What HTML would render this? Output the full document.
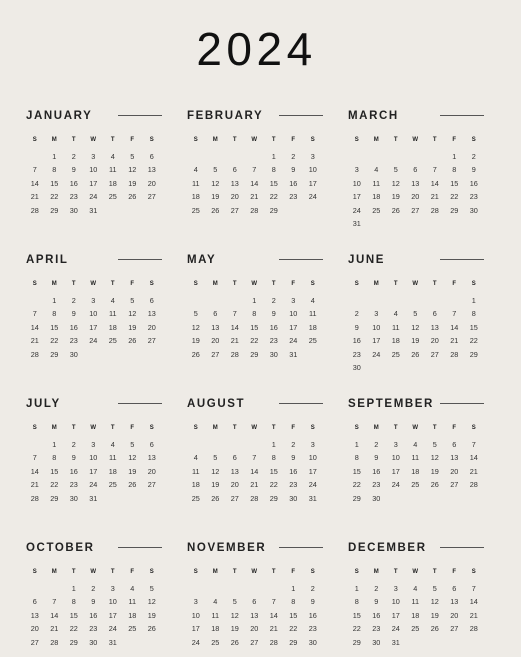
<!DOCTYPE html>
<html><head><meta charset="utf-8"><style>
body{margin:0;width:521px;height:657px;background:#eeebe6;font-family:"Liberation Sans",sans-serif;position:relative;overflow:hidden;color:#2a2a2a}
h1{position:absolute;top:24px;left:-4px;width:521px;text-align:center;margin:0;font-size:46px;font-weight:normal;letter-spacing:4.5px;line-height:50px;color:#111;box-sizing:border-box}
.m{position:absolute;width:140px}
.t{position:absolute;top:0;left:1px;font-size:11.5px;font-weight:bold;letter-spacing:1.6px;color:#222;line-height:14px}
.ln{position:absolute;top:6px;left:93px;width:44px;height:1.3px;background:#555}
.g{position:absolute;top:25px;left:0;display:grid;grid-template-columns:repeat(7,19.5px);grid-template-rows:15.5px;grid-auto-rows:13.5px;font-size:7.3px;text-align:center;line-height:13.5px;color:#333}
.h{font-size:6px;font-weight:bold;color:#222}
</style></head><body>
<h1>2024</h1>

<div class="m" style="left:25px;top:109px"><div class="t">JANUARY</div><div class="ln"></div><div class="g"><b class="h">S</b><b class="h">M</b><b class="h">T</b><b class="h">W</b><b class="h">T</b><b class="h">F</b><b class="h">S</b><span style="grid-column-start:2">1</span><span>2</span><span>3</span><span>4</span><span>5</span><span>6</span><span>7</span><span>8</span><span>9</span><span>10</span><span>11</span><span>12</span><span>13</span><span>14</span><span>15</span><span>16</span><span>17</span><span>18</span><span>19</span><span>20</span><span>21</span><span>22</span><span>23</span><span>24</span><span>25</span><span>26</span><span>27</span><span>28</span><span>29</span><span>30</span><span>31</span></div></div>

<div class="m" style="left:186px;top:109px"><div class="t">FEBRUARY</div><div class="ln"></div><div class="g"><b class="h">S</b><b class="h">M</b><b class="h">T</b><b class="h">W</b><b class="h">T</b><b class="h">F</b><b class="h">S</b><span style="grid-column-start:5">1</span><span>2</span><span>3</span><span>4</span><span>5</span><span>6</span><span>7</span><span>8</span><span>9</span><span>10</span><span>11</span><span>12</span><span>13</span><span>14</span><span>15</span><span>16</span><span>17</span><span>18</span><span>19</span><span>20</span><span>21</span><span>22</span><span>23</span><span>24</span><span>25</span><span>26</span><span>27</span><span>28</span><span>29</span></div></div>

<div class="m" style="left:347px;top:109px"><div class="t">MARCH</div><div class="ln"></div><div class="g"><b class="h">S</b><b class="h">M</b><b class="h">T</b><b class="h">W</b><b class="h">T</b><b class="h">F</b><b class="h">S</b><span style="grid-column-start:6">1</span><span>2</span><span>3</span><span>4</span><span>5</span><span>6</span><span>7</span><span>8</span><span>9</span><span>10</span><span>11</span><span>12</span><span>13</span><span>14</span><span>15</span><span>16</span><span>17</span><span>18</span><span>19</span><span>20</span><span>21</span><span>22</span><span>23</span><span>24</span><span>25</span><span>26</span><span>27</span><span>28</span><span>29</span><span>30</span><span>31</span></div></div>

<div class="m" style="left:25px;top:253px"><div class="t">APRIL</div><div class="ln"></div><div class="g"><b class="h">S</b><b class="h">M</b><b class="h">T</b><b class="h">W</b><b class="h">T</b><b class="h">F</b><b class="h">S</b><span style="grid-column-start:2">1</span><span>2</span><span>3</span><span>4</span><span>5</span><span>6</span><span>7</span><span>8</span><span>9</span><span>10</span><span>11</span><span>12</span><span>13</span><span>14</span><span>15</span><span>16</span><span>17</span><span>18</span><span>19</span><span>20</span><span>21</span><span>22</span><span>23</span><span>24</span><span>25</span><span>26</span><span>27</span><span>28</span><span>29</span><span>30</span></div></div>

<div class="m" style="left:186px;top:253px"><div class="t">MAY</div><div class="ln"></div><div class="g"><b class="h">S</b><b class="h">M</b><b class="h">T</b><b class="h">W</b><b class="h">T</b><b class="h">F</b><b class="h">S</b><span style="grid-column-start:4">1</span><span>2</span><span>3</span><span>4</span><span>5</span><span>6</span><span>7</span><span>8</span><span>9</span><span>10</span><span>11</span><span>12</span><span>13</span><span>14</span><span>15</span><span>16</span><span>17</span><span>18</span><span>19</span><span>20</span><span>21</span><span>22</span><span>23</span><span>24</span><span>25</span><span>26</span><span>27</span><span>28</span><span>29</span><span>30</span><span>31</span></div></div>

<div class="m" style="left:347px;top:253px"><div class="t">JUNE</div><div class="ln"></div><div class="g"><b class="h">S</b><b class="h">M</b><b class="h">T</b><b class="h">W</b><b class="h">T</b><b class="h">F</b><b class="h">S</b><span style="grid-column-start:7">1</span><span>2</span><span>3</span><span>4</span><span>5</span><span>6</span><span>7</span><span>8</span><span>9</span><span>10</span><span>11</span><span>12</span><span>13</span><span>14</span><span>15</span><span>16</span><span>17</span><span>18</span><span>19</span><span>20</span><span>21</span><span>22</span><span>23</span><span>24</span><span>25</span><span>26</span><span>27</span><span>28</span><span>29</span><span>30</span></div></div>

<div class="m" style="left:25px;top:397px"><div class="t">JULY</div><div class="ln"></div><div class="g"><b class="h">S</b><b class="h">M</b><b class="h">T</b><b class="h">W</b><b class="h">T</b><b class="h">F</b><b class="h">S</b><span style="grid-column-start:2">1</span><span>2</span><span>3</span><span>4</span><span>5</span><span>6</span><span>7</span><span>8</span><span>9</span><span>10</span><span>11</span><span>12</span><span>13</span><span>14</span><span>15</span><span>16</span><span>17</span><span>18</span><span>19</span><span>20</span><span>21</span><span>22</span><span>23</span><span>24</span><span>25</span><span>26</span><span>27</span><span>28</span><span>29</span><span>30</span><span>31</span></div></div>

<div class="m" style="left:186px;top:397px"><div class="t">AUGUST</div><div class="ln"></div><div class="g"><b class="h">S</b><b class="h">M</b><b class="h">T</b><b class="h">W</b><b class="h">T</b><b class="h">F</b><b class="h">S</b><span style="grid-column-start:5">1</span><span>2</span><span>3</span><span>4</span><span>5</span><span>6</span><span>7</span><span>8</span><span>9</span><span>10</span><span>11</span><span>12</span><span>13</span><span>14</span><span>15</span><span>16</span><span>17</span><span>18</span><span>19</span><span>20</span><span>21</span><span>22</span><span>23</span><span>24</span><span>25</span><span>26</span><span>27</span><span>28</span><span>29</span><span>30</span><span>31</span></div></div>

<div class="m" style="left:347px;top:397px"><div class="t">SEPTEMBER</div><div class="ln"></div><div class="g"><b class="h">S</b><b class="h">M</b><b class="h">T</b><b class="h">W</b><b class="h">T</b><b class="h">F</b><b class="h">S</b><span>1</span><span>2</span><span>3</span><span>4</span><span>5</span><span>6</span><span>7</span><span>8</span><span>9</span><span>10</span><span>11</span><span>12</span><span>13</span><span>14</span><span>15</span><span>16</span><span>17</span><span>18</span><span>19</span><span>20</span><span>21</span><span>22</span><span>23</span><span>24</span><span>25</span><span>26</span><span>27</span><span>28</span><span>29</span><span>30</span></div></div>

<div class="m" style="left:25px;top:541px"><div class="t">OCTOBER</div><div class="ln"></div><div class="g"><b class="h">S</b><b class="h">M</b><b class="h">T</b><b class="h">W</b><b class="h">T</b><b class="h">F</b><b class="h">S</b><span style="grid-column-start:3">1</span><span>2</span><span>3</span><span>4</span><span>5</span><span>6</span><span>7</span><span>8</span><span>9</span><span>10</span><span>11</span><span>12</span><span>13</span><span>14</span><span>15</span><span>16</span><span>17</span><span>18</span><span>19</span><span>20</span><span>21</span><span>22</span><span>23</span><span>24</span><span>25</span><span>26</span><span>27</span><span>28</span><span>29</span><span>30</span><span>31</span></div></div>

<div class="m" style="left:186px;top:541px"><div class="t">NOVEMBER</div><div class="ln"></div><div class="g"><b class="h">S</b><b class="h">M</b><b class="h">T</b><b class="h">W</b><b class="h">T</b><b class="h">F</b><b class="h">S</b><span style="grid-column-start:6">1</span><span>2</span><span>3</span><span>4</span><span>5</span><span>6</span><span>7</span><span>8</span><span>9</span><span>10</span><span>11</span><span>12</span><span>13</span><span>14</span><span>15</span><span>16</span><span>17</span><span>18</span><span>19</span><span>20</span><span>21</span><span>22</span><span>23</span><span>24</span><span>25</span><span>26</span><span>27</span><span>28</span><span>29</span><span>30</span></div></div>

<div class="m" style="left:347px;top:541px"><div class="t">DECEMBER</div><div class="ln"></div><div class="g"><b class="h">S</b><b class="h">M</b><b class="h">T</b><b class="h">W</b><b class="h">T</b><b class="h">F</b><b class="h">S</b><span>1</span><span>2</span><span>3</span><span>4</span><span>5</span><span>6</span><span>7</span><span>8</span><span>9</span><span>10</span><span>11</span><span>12</span><span>13</span><span>14</span><span>15</span><span>16</span><span>17</span><span>18</span><span>19</span><span>20</span><span>21</span><span>22</span><span>23</span><span>24</span><span>25</span><span>26</span><span>27</span><span>28</span><span>29</span><span>30</span><span>31</span></div></div>
</body></html>
